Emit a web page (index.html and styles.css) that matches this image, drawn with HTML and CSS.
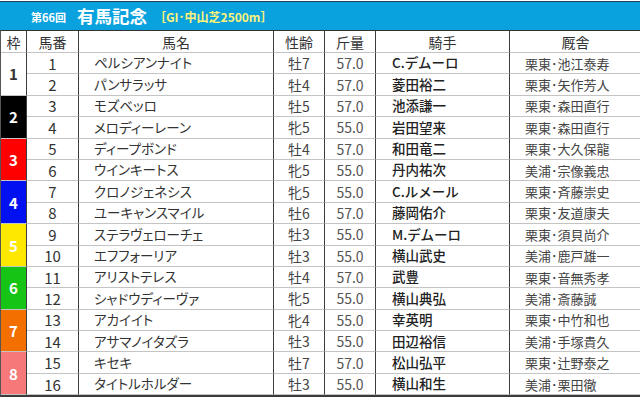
FILE: index.html
```html
<!DOCTYPE html>
<html lang="ja">
<head>
<meta charset="utf-8">
<link rel="stylesheet" href="styles.css">
</head>
<body>
<div class="page">
  <div class="title">
    <span class="kai">第66回</span>
    <span class="race">有馬記念</span>
    <span class="info">［GI･中山芝2500m］</span>
  </div>
  <div class="grid">
    <div class="h">枠</div><div class="h">馬番</div><div class="h">馬名</div><div class="h">性齢</div><div class="h">斤量</div><div class="h">騎手</div><div class="h last">厩舎</div>

    <div class="waku w1">1</div>
    <div class="c num">1</div><div class="c name">ペルシアンナイト</div><div class="c sa">牡7</div><div class="c kin">57.0</div><div class="c jk">C.デムーロ</div><div class="c tr last">栗東･池江泰寿</div>
    <div class="c num">2</div><div class="c name">パンサラッサ</div><div class="c sa">牡4</div><div class="c kin">57.0</div><div class="c jk">菱田裕二</div><div class="c tr last">栗東･矢作芳人</div>

    <div class="waku w2">2</div>
    <div class="c num">3</div><div class="c name">モズベッロ</div><div class="c sa">牡5</div><div class="c kin">57.0</div><div class="c jk">池添謙一</div><div class="c tr last">栗東･森田直行</div>
    <div class="c num">4</div><div class="c name">メロディーレーン</div><div class="c sa">牝5</div><div class="c kin">55.0</div><div class="c jk">岩田望来</div><div class="c tr last">栗東･森田直行</div>

    <div class="waku w3">3</div>
    <div class="c num">5</div><div class="c name">ディープボンド</div><div class="c sa">牡4</div><div class="c kin">57.0</div><div class="c jk">和田竜二</div><div class="c tr last">栗東･大久保龍</div>
    <div class="c num">6</div><div class="c name">ウインキートス</div><div class="c sa">牝5</div><div class="c kin">55.0</div><div class="c jk">丹内祐次</div><div class="c tr last">美浦･宗像義忠</div>

    <div class="waku w4">4</div>
    <div class="c num">7</div><div class="c name">クロノジェネシス</div><div class="c sa">牝5</div><div class="c kin">55.0</div><div class="c jk">C.ルメール</div><div class="c tr last">栗東･斉藤崇史</div>
    <div class="c num">8</div><div class="c name">ユーキャンスマイル</div><div class="c sa">牡6</div><div class="c kin">57.0</div><div class="c jk">藤岡佑介</div><div class="c tr last">栗東･友道康夫</div>

    <div class="waku w5">5</div>
    <div class="c num">9</div><div class="c name">ステラヴェローチェ</div><div class="c sa">牡3</div><div class="c kin">55.0</div><div class="c jk">M.デムーロ</div><div class="c tr last">栗東･須貝尚介</div>
    <div class="c num">10</div><div class="c name">エフフォーリア</div><div class="c sa">牡3</div><div class="c kin">55.0</div><div class="c jk">横山武史</div><div class="c tr last">美浦･鹿戸雄一</div>

    <div class="waku w6">6</div>
    <div class="c num">11</div><div class="c name">アリストテレス</div><div class="c sa">牡4</div><div class="c kin">57.0</div><div class="c jk">武豊</div><div class="c tr last">栗東･音無秀孝</div>
    <div class="c num">12</div><div class="c name">シャドウディーヴァ</div><div class="c sa">牝5</div><div class="c kin">55.0</div><div class="c jk">横山典弘</div><div class="c tr last">美浦･斎藤誠</div>

    <div class="waku w7">7</div>
    <div class="c num">13</div><div class="c name">アカイイト</div><div class="c sa">牝4</div><div class="c kin">55.0</div><div class="c jk">幸英明</div><div class="c tr last">栗東･中竹和也</div>
    <div class="c num">14</div><div class="c name">アサマノイタズラ</div><div class="c sa">牡3</div><div class="c kin">55.0</div><div class="c jk">田辺裕信</div><div class="c tr last">美浦･手塚貴久</div>

    <div class="waku w8">8</div>
    <div class="c num">15</div><div class="c name">キセキ</div><div class="c sa">牡7</div><div class="c kin">57.0</div><div class="c jk">松山弘平</div><div class="c tr last">栗東･辻野泰之</div>
    <div class="c num">16</div><div class="c name">タイトルホルダー</div><div class="c sa">牡3</div><div class="c kin">55.0</div><div class="c jk">横山和生</div><div class="c tr last">美浦･栗田徹</div>
  </div>
</div>
</body>
</html>
```
FILE: styles.css
```css
* { box-sizing: border-box; }
html, body { margin: 0; padding: 0; background: #fff; }
body {
  width: 640px;
  height: 400px;
  overflow: hidden;
  font-family: "Noto Sans CJK JP", "Noto Sans", sans-serif;
  color: #333;
}
.page { padding-top: 1px; }
.title {
  height: 29px;
  background: #0aa2de;
  border-top: 1px solid #1f4258;
  display: flex;
  align-items: center;
  padding-left: 31px;
  color: #fff;
  line-height: 1;
}
.kai { font-size: 11px; font-weight: bold; margin-right: 11px; margin-top: 2px; }
.race { font-size: 17.5px; font-weight: bold; margin-right: 7px; }
.info { font-size: 12px; font-weight: bold; color: #fff27a; margin-top: 2px; }

.grid {
  display: grid;
  grid-template-columns: 26px 52px 195px 51px 51px 134px 131px;
  grid-template-rows: 22px repeat(16, 21.4px);
  border-top: 1px solid #333;
  border-bottom: 2px solid #3a3a3a;
  border-left: 1px solid #555;
  width: 640px;
}
.h, .c, .waku {
  display: flex;
  align-items: center;
  border-right: 1px solid #3d3d3d;
  border-bottom: 1px solid #c4c4c4;
  font-size: 13px;
  line-height: 1;
  white-space: nowrap;
}
.last { border-right: none; }
.h { justify-content: center; color: #333; font-size: 14px; }
.waku {
  grid-row: span 2;
  justify-content: center;
  font-size: 15px;
  font-weight: bold;
  color: #fff;
}
.w1 { background: #fff; color: #333; }
.w2 { background: #000; }
.w3 { background: #ff0000; }
.w4 { background: #0010f0; }
.w5 { background: #ffe800; }
.w6 { background: #16c416; }
.w7 { background: #f26f00; }
.w8 { background: #f67878; }

.num { justify-content: center; font-size: 15px; color: #333; }
.name { padding-left: 15px; color: #333; font-size: 13.5px; font-feature-settings: "palt"; }
.sa { justify-content: center; color: #444; font-size: 14px; font-feature-settings: "palt"; }
.kin { justify-content: center; color: #555; font-size: 14px; }
.jk { padding-left: 16px; color: #222; font-weight: 500; font-size: 13.5px; }
.tr { padding-left: 15px; color: #444; font-size: 13px; font-feature-settings: "palt"; }
```
